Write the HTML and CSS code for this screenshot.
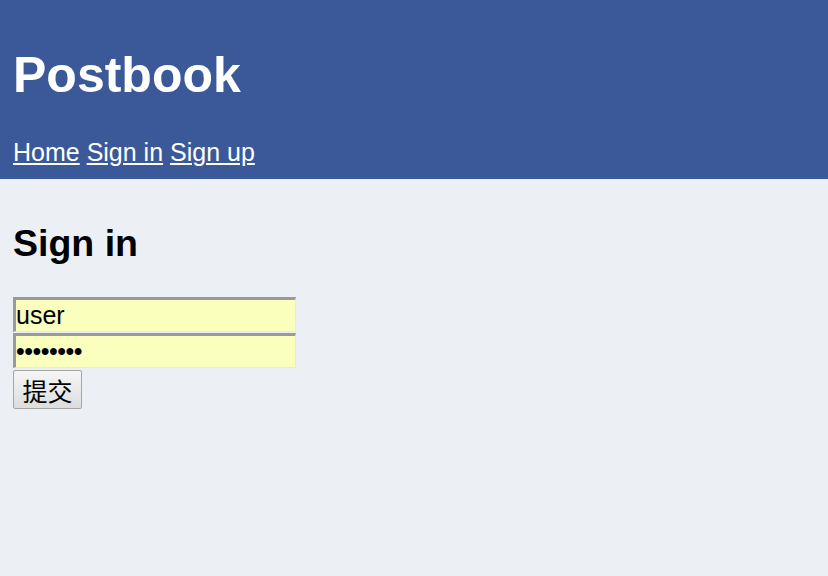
FILE: index.html
```html
<!DOCTYPE html>
<html>
<head>
<meta charset="utf-8">
<title>Postbook</title>
<link rel="stylesheet" href="styles.css">
</head>
<body>
<header class="site-header">
  <h1 class="site-title">Postbook</h1>
  <nav class="site-nav">
    <a href="#">Home</a> <a href="#">Sign in</a> <a href="#">Sign up</a>
  </nav>
</header>
<main class="content">
  <h2 class="page-title">Sign in</h2>
  <form class="signin-form">
    <input class="field" type="text" value="user">
    <input class="field field-password" type="password" value="password">
    <button class="submit" type="submit">提交</button>
  </form>
</main>
</body>
</html>
```
FILE: styles.css
```css
html, body {
  margin: 0;
  padding: 0;
}
body {
  background: #ecf0f5;
  font-family: "Liberation Sans", Arial, sans-serif;
  font-size: 25px;
  color: #000;
  min-height: 576px;
}
.site-header {
  background: #3b5998;
  padding: 12px 13px 12px;
}
.site-title {
  margin: 34px 0 33px;
  font-size: 50px;
  line-height: 59px;
  font-weight: bold;
  color: #fff;
}
.site-nav {
  font-size: 25px;
  line-height: 29px;
}
.site-nav a {
  color: #fff;
  text-decoration: underline;
}
.content {
  padding: 0 13px;
}
.page-title {
  margin: 42px 0 32px;
  font-size: 37.5px;
  line-height: 44px;
  font-weight: bold;
}
.signin-form {
  display: flex;
  flex-direction: column;
  align-items: flex-start;
}
.field {
  box-sizing: border-box;
  width: 283px;
  height: 35px;
  margin: 0;
  padding: 0;
  border-width: 3px 1px 1px 3px;
  border-style: solid;
  border-color: #9a9a9a #e6e8ea #e6e8ea #9a9a9a;
  background: #faffbd;
  font-family: "Liberation Sans", Arial, sans-serif;
  font-size: 25px;
  color: #000;
  outline: none;
}
.field + .field {
  margin-top: 1px;
}
.field-password {
  letter-spacing: -0.5px;
}
.submit {
  box-sizing: border-box;
  margin-top: 2px;
  width: 69px;
  height: 39px;
  padding: 0;
  border: 1px solid #a6a6a6;
  border-radius: 2px;
  background: linear-gradient(#f6f6f6, #dddddd);
  font-family: "Liberation Sans", "Noto Sans CJK SC", sans-serif;
  font-size: 25px;
  color: #000;
}
```
